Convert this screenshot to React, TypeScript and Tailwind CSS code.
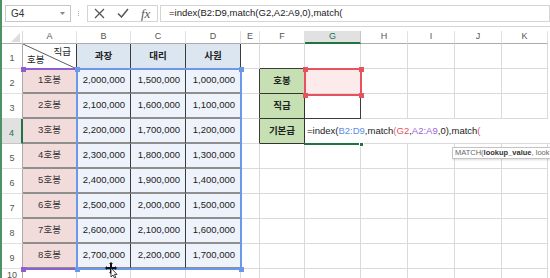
import type { ReactNode } from 'react'

const FONT = "font-['Liberation_Sans','Noto_Sans_CJK_KR',sans-serif]"

// widths of columns A..K
const colW = [
  'w-[54px]',
  'w-[54px]',
  'w-[55px]',
  'w-[55px]',
  'w-[19px]',
  'w-[45px]',
  'w-[56px]',
  'w-[47px]',
  'w-[47px]',
  'w-[47px]',
  'w-[46px]',
]
const letters = ['A', 'B', 'C', 'D', 'E', 'F', 'G', 'H', 'I', 'J', 'K']

const grid = 'border-r border-b border-[#dadada]'
const darkBox = 'border-r border-b border-[#3c3c3c]'
const edgeR = 'border-r border-b border-r-[#3c3c3c] border-b-[#dadada]'
const edgeB = 'border-r border-b border-r-[#dadada] border-b-[#3c3c3c]'
const headCell =
  'flex items-center justify-center border-r border-b border-[#3c3c3c] bg-[#dce6f1] font-bold text-[#222]'
const stepCell =
  'flex items-center justify-center border-r border-b-2 border-r-[#3c3c3c] border-b-[#8e8e8e] bg-[#f2dcdb] text-[#333]'
const numCell =
  'flex items-center justify-end pr-[5px] border-r border-b-2 border-r-[#3c3c3c] border-b-[#8e8e8e] bg-[#eef3fb] text-[#222]'
const greenCell =
  'flex items-center justify-center border-r border-b border-[#333] bg-[#c6e0b4] font-bold text-[#222]'

const fmt = (n: number) => n.toLocaleString('en-US')
const steps = Array.from({ length: 8 }, (_, i) => ({
  label: `${i + 1}호봉`,
  pay: [2000000, 1500000, 1000000].map((base) => fmt(base + i * 100000)),
}))
const labels = ['호봉', '직급', '기본급']

function Cell({ col, cls = grid, children }: { col: number; cls?: string; children?: ReactNode }) {
  return <div className={`${colW[col]} h-full shrink-0 ${cls}`}>{children}</div>
}

function RowHead({ n, active }: { n: number; active?: boolean }) {
  if (active) {
    return (
      <div className="flex h-full w-[21px] shrink-0 items-end justify-center border-r-2 border-b border-r-[#217346] border-b-[#c6c6c6] bg-[#e1e1e1] pb-[3px] text-[9px] text-[#217346]">
        {n}
      </div>
    )
  }
  return (
    <div className="flex h-full w-[21px] shrink-0 items-end justify-center border-r border-b border-r-[#ababab] border-b-[#e1e1e1] pb-[3px] text-[9px] text-[#555]">
      {n}
    </div>
  )
}

function Formula() {
  return (
    <>
      =index(<span className="text-[#5b8ee6]">B2:D9</span>,match<span className="text-[#e5607a]">(</span>
      <span className="text-[#e5515c]">G2</span>,<span className="text-[#9a5fd6]">A2:A9</span>,0),match
      <span className="text-[#e5515c]">(</span>
    </>
  )
}

export default function App() {
  return (
    <div className={`relative flex h-[278px] w-[550px] overflow-hidden bg-white ${FONT}`}>
      <div className="w-[2px] shrink-0 bg-[#4f9166]" />
      <div className="flex flex-1 flex-col">
        {/* formula bar */}
        <div className="flex h-[27px] shrink-0 items-center border-b border-[#d5d5d5]">
          <div className="ml-[3px] flex h-[17px] w-[66px] items-center border border-[#c6c6c6] pl-[5px] text-[10px] text-[#333]">
            G4
            <svg className="ml-auto mr-[5px]" width="5" height="3" viewBox="0 0 5 3">
              <path d="M0 0h5L2.5 3z" fill="#888" />
            </svg>
          </div>
          <div className="ml-[7px] flex flex-col gap-[1px]">
            <span className="h-[1px] w-[1px] bg-[#aaa]" />
            <span className="h-[1px] w-[1px] bg-[#aaa]" />
            <span className="h-[1px] w-[1px] bg-[#aaa]" />
          </div>
          <div className="ml-[8px] flex h-[17px] w-[71px] items-center border border-[#d5d5d5]">
            <svg className="ml-[6px]" width="11" height="11" viewBox="0 0 11 11">
              <path d="M1 1l9 9M10 1l-9 9" stroke="#555" strokeWidth="1.3" fill="none" />
            </svg>
            <svg className="ml-[12px]" width="12" height="10" viewBox="0 0 12 10">
              <path d="M1 5.5l3.5 3.5L11 1" stroke="#555" strokeWidth="1.5" fill="none" />
            </svg>
            <span className="ml-[12px] font-['Liberation_Serif',serif] text-[13px] italic leading-none text-[#555]">
              fx
            </span>
          </div>
          <div className="ml-[2px] flex h-[17px] flex-1 items-center border border-[#d5d5d5] pl-[8px] font-['Liberation_Sans',sans-serif] text-[9.5px] text-[#222]">
            =index(B2:D9,match(G2,A2:A9,0),match(
          </div>
        </div>
        <div className="h-[4px] shrink-0" />

        {/* column headers */}
        <div className="flex h-[13px] shrink-0">
          <div className="relative w-[21px] shrink-0 border-r border-b border-r-[#dadada] border-b-[#ababab]">
            <svg className="absolute left-0 top-0" width="20" height="12" viewBox="0 0 20 12">
              <path d="M18 2v9H9z" fill="#dcdcdc" />
            </svg>
          </div>
          {letters.map((l, i) =>
            l === 'G' ? (
              <div
                key={l}
                className={`${colW[i]} flex shrink-0 items-center justify-center border-r border-b-2 border-r-[#c6c6c6] border-b-[#217346] bg-[#e1e1e1] text-[9px] text-[#217346]`}
              >
                {l}
              </div>
            ) : (
              <div
                key={l}
                className={`${colW[i]} flex shrink-0 items-center justify-center border-r border-b border-r-[#e1e1e1] border-b-[#ababab] text-[9px] text-[#555]`}
              >
                {l}
              </div>
            ),
          )}
        </div>

        {/* row 1 */}
        <div className="flex h-[25px] shrink-0 text-[9.5px]">
          <RowHead n={1} />
          <Cell col={0} cls={`relative ${darkBox}`}>
            <svg className="absolute left-0 top-0" width="54" height="25" viewBox="0 0 54 25">
              <path d="M0 0L54 25" stroke="#333" strokeWidth="0.8" />
            </svg>
            <span className="absolute right-[5px] top-[1px] text-[#222]">직급</span>
            <span className="absolute bottom-[1px] left-[4px] text-[#222]">호봉</span>
          </Cell>
          <Cell col={1} cls={headCell}>과장</Cell>
          <Cell col={2} cls={headCell}>대리</Cell>
          <Cell col={3} cls={headCell}>사원</Cell>
          <Cell col={4} />
          <Cell col={5} cls={edgeB} />
          <Cell col={6} cls={edgeB} />
          <Cell col={7} />
          <Cell col={8} />
          <Cell col={9} />
          <Cell col={10} />
        </div>

        {/* rows 2..9 */}
        {steps.map((s, i) => (
          <div key={s.label} className="flex h-[25px] shrink-0 text-[9.5px]">
            <RowHead n={i + 2} active={i === 2} />
            <Cell col={0} cls={stepCell}>{s.label}</Cell>
            {s.pay.map((p, j) => (
              <Cell key={j} col={j + 1} cls={numCell}>
                {p}
              </Cell>
            ))}
            <Cell col={4} cls={i < 3 ? edgeR : grid} />
            {i < 3 ? (
              <Cell col={5} cls={greenCell}>{labels[i]}</Cell>
            ) : (
              <Cell col={5} />
            )}
            {i === 0 && <Cell col={6} cls="border-r border-b border-[#dadada] bg-[#fdebeb]" />}
            {i === 1 && <Cell col={6} cls={darkBox} />}
            {i === 2 ? (
              <div className="flex h-full flex-1 items-center whitespace-nowrap border-b border-[#dadada] bg-white pl-[2px] font-['Liberation_Sans',sans-serif] text-[9.5px] text-[#222]">
                <Formula />
              </div>
            ) : (
              <>
                {i > 2 && <Cell col={6} />}
                <Cell col={7} />
                <Cell col={8} />
                <Cell col={9} />
                <Cell col={10} />
              </>
            )}
          </div>
        ))}

        {/* row 10 */}
        <div className="flex h-[17px] shrink-0">
          <RowHead n={10} />
          {letters.map((l, i) => (
            <Cell key={l} col={i} />
          ))}
        </div>
      </div>

      {/* reference highlights */}
      <div className="absolute left-[22px] top-[68px] h-[202px] w-[56px] border-y-2 border-[#8f5fd0]" />
      <div className="absolute left-[21px] top-[67px] h-[5px] w-[5px] bg-[#8f5fd0]" />
      <div className="absolute left-[21px] top-[267px] h-[5px] w-[5px] bg-[#8f5fd0]" />

      <div className="absolute left-[76px] top-[68px] h-[202px] w-[166px] border-2 border-[#6d98ea]" />
      <div className="absolute left-[75px] top-[67px] h-[5px] w-[5px] bg-[#6d98ea]" />
      <div className="absolute left-[239px] top-[67px] h-[5px] w-[5px] bg-[#6d98ea]" />
      <div className="absolute left-[75px] top-[267px] h-[5px] w-[5px] bg-[#6d98ea]" />
      <div className="absolute left-[239px] top-[267px] h-[5px] w-[5px] bg-[#6d98ea]" />

      <div className="absolute left-[304px] top-[68px] h-[28px] w-[58px] border-2 border-[#e5545c]" />
      <div className="absolute left-[303px] top-[67px] h-[5px] w-[5px] bg-[#e5545c]" />
      <div className="absolute left-[359px] top-[67px] h-[5px] w-[5px] bg-[#e5545c]" />
      <div className="absolute left-[303px] top-[93px] h-[5px] w-[5px] bg-[#e5545c]" />
      <div className="absolute left-[359px] top-[93px] h-[5px] w-[5px] bg-[#e5545c]" />

      {/* active cell G4 */}
      <div className="absolute left-[304px] top-[143px] h-[2px] w-[58px] bg-[#217346]" />
      <div className="absolute left-[359px] top-[142px] h-[5px] w-[5px] border border-white bg-[#217346]" />

      {/* function tooltip */}
      <div className="absolute left-[452px] top-[147px] flex h-[12px] w-[100px] items-center overflow-hidden whitespace-nowrap border-y border-l border-[#c4c4c4] bg-white pl-[2px] font-['Liberation_Sans',sans-serif] text-[7.5px] text-[#666] shadow-[1px_1px_2px_rgba(0,0,0,0.15)]">
        MATCH(<b className="text-[#333]">lookup_value</b>, look
      </div>

      {/* mouse cursor */}
      <svg className="absolute left-[104px] top-[262px]" width="16" height="16" viewBox="0 0 16 16">
        <path d="M7 0l2 2H8v3h3V4l2 2-2 2V7H8v3h1l-2 2-2-2h1V7H3v1L1 6l2-2v1h3V2H5z" fill="#111" />
        <path d="M7 6v9l2-2 1.5 3 1.3-.6-1.4-3H13z" fill="#fff" stroke="#111" strokeWidth="0.8" />
      </svg>
    </div>
  )
}
